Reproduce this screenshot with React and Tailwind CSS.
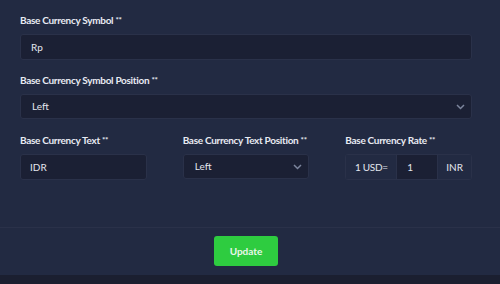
import React from 'react';

function Label({ children }) {
  return (
    <label className="block h-[13px] text-[10px] leading-[13px] font-bold tracking-[-0.3px] text-[#e8ebf3] mb-[7px]">
      {children} <span className="text-[8px] align-top">**</span>
    </label>
  );
}

function Chevron() {
  return (
    <svg width="9" height="6" viewBox="0 0 9 6" className="text-[#7c859d]">
      <path d="M1 1l3.5 3.5L8 1" fill="none" stroke="currentColor" strokeWidth="1.5" />
    </svg>
  );
}

function SelectBox({ value }) {
  return (
    <div className="flex h-[25px] items-center justify-between rounded-[3px] border border-[#2a3149] bg-[#1b2034] pl-[11px] pr-[6px] text-[10px] text-[#e3e6ee]">
      <span>{value}</span>
      <Chevron />
    </div>
  );
}

export default function App() {
  return (
    <div className="h-[284px] w-[500px] bg-[#222a42] font-['Lato',sans-serif] flex flex-col">
      <div className="pl-5 pr-[28px] pt-[14px]">
        <div className="mb-[14px]">
          <Label>Base Currency Symbol</Label>
          <div className="flex h-[26px] items-center rounded-[3px] border border-[#2a3149] bg-[#1b2034] px-[10px] text-[10px] text-[#e3e6ee]">
            Rp
          </div>
        </div>
        <div className="mb-[15px]">
          <Label>Base Currency Symbol Position</Label>
          <SelectBox value="Left" />
        </div>
        <div className="grid grid-cols-3 gap-x-[36px]">
          <div>
            <Label>Base Currency Text</Label>
            <div className="flex h-[26px] items-center rounded-[3px] border border-[#2a3149] bg-[#1b2034] px-[9px] text-[10px] text-[#e3e6ee]">
              IDR
            </div>
          </div>
          <div>
            <Label>Base Currency Text Position</Label>
            <SelectBox value="Left" />
          </div>
          <div>
            <Label>Base Currency Rate</Label>
            <div className="flex h-[26px] rounded-[3px] border border-[#2a3149] text-[10px] text-[#e3e6ee]">
              <div className="flex w-[51px] items-center justify-center border-r border-[#2a3149] bg-[#222a42] tracking-[-0.3px]">1 USD=</div>
              <div className="flex w-[40px] items-center bg-[#1b2034] px-[10px]">1</div>
              <div className="flex flex-1 items-center justify-center border-l border-[#2a3149] bg-[#222a42]">INR</div>
            </div>
          </div>
        </div>
      </div>
      <div className="mt-[47px] border-t border-[#2a3149] flex justify-center pt-[8px] pb-[9px] pr-[8px]">
        <button className="h-[30px] w-[64px] rounded-[3px] bg-[#2ecc40] text-[10px] font-bold text-[#e9f7ea]">
          Update
        </button>
      </div>
      <div className="flex-1 bg-[#1b1f30]" />
    </div>
  );
}
